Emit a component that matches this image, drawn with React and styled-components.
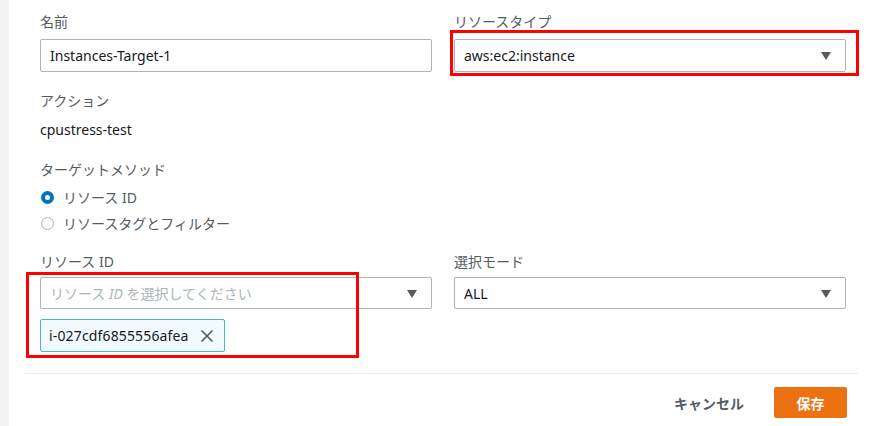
import styled, { createGlobalStyle } from 'styled-components';

const GlobalStyle = createGlobalStyle`
  html, body {
    margin: 0;
    padding: 0;
    background: #ffffff;
  }
  body {
    font-family: "Noto Sans", "Noto Sans CJK JP", sans-serif;
    font-size: 14px;
    color: #16191f;
  }
`;

const Page = styled.div`
  position: relative;
  display: flex;
  width: 884px;
  height: 426px;
  overflow: hidden;
`;

const Strip = styled.div`
  width: 9px;
  background: #f2f3f3;
`;

const Panel = styled.div`
  flex: 1;
  padding: 0 26px 0 15px;
`;

const Content = styled.div`
  padding: 12px 12px 0 16px;
`;

const Grid = styled.div`
  display: grid;
  grid-template-columns: 392px 392px;
  column-gap: 22px;
  margin-top: ${p => p.$top || 0}px;
`;

const Field = styled.div`
  display: flex;
  flex-direction: column;
`;

const Label = styled.div`
  font-size: 14px;
  line-height: 20px;
  color: #545b64;
  margin-top: ${p => p.$top || 0}px;
  margin-bottom: ${p => p.$bottom || 0}px;
`;

const Value = styled.div`
  font-size: 14px;
  line-height: 20px;
  color: #16191f;
  margin-top: ${p => p.$top || 0}px;
`;

const Box = styled.div`
  box-sizing: border-box;
  height: ${p => p.$h || 32}px;
  border: 1px solid #aab7b8;
  border-radius: 2px;
  background: #fff;
  display: flex;
  align-items: center;
  padding: 0 14px 0 9px;
  font-size: 14px;
  color: #16191f;
`;

const BoxText = styled.span`
  flex: 1;
  color: ${p => (p.$placeholder ? '#aab7b8' : '#16191f')};
  white-space: nowrap;
`;

const Caret = styled.span`
  width: 0;
  height: 0;
  border-left: 5px solid transparent;
  border-right: 5px solid transparent;
  border-top: 8px solid #545b64;
  margin-top: 1px;
`;

const RadioRow = styled.label`
  display: flex;
  align-items: center;
  gap: 9px;
  height: 20px;
  margin-top: ${p => p.$top || 0}px;
  font-size: 14px;
  color: #545b64;
`;

const RadioDot = styled.span`
  box-sizing: border-box;
  width: 13px;
  height: 13px;
  border-radius: 50%;
  border: ${p => (p.$checked ? '4px solid #0073bb' : '1px solid #aab7b8')};
  background: #fff;
  margin-left: 1px;
`;

const Tag = styled.div`
  box-sizing: border-box;
  display: inline-flex;
  align-self: flex-start;
  align-items: center;
  gap: 11px;
  height: 33px;
  margin-top: 10px;
  padding: 0 10px 0 8px;
  background: #f1faff;
  border: 1px solid #44b9d6;
  border-radius: 2px;
  font-size: 14px;
  letter-spacing: 0.15px;
  color: #16191f;
`;

const Divider = styled.hr`
  border: none;
  border-top: 1px solid #eaeded;
  margin: 21px 0 0;
`;

const Footer = styled.div`
  display: flex;
  justify-content: flex-end;
  align-items: center;
  gap: 30px;
  margin-top: 13px;
  padding-right: 11px;
`;

const TextButton = styled.button`
  border: none;
  background: none;
  font-family: inherit;
  font-size: 14px;
  font-weight: 700;
  color: #545b64;
  padding: 0;
`;

const PrimaryButton = styled.button`
  box-sizing: border-box;
  width: 73px;
  height: 31px;
  border: none;
  border-radius: 2px;
  background: #ec7211;
  color: #fff;
  font-family: inherit;
  font-size: 14px;
  font-weight: 700;
`;

const Highlight = styled.div`
  position: absolute;
  left: ${p => p.$x}px;
  top: ${p => p.$y}px;
  width: ${p => p.$w}px;
  height: ${p => p.$h}px;
  box-sizing: border-box;
  border: 3px solid #ff0000;
  pointer-events: none;
`;

const CloseIcon = () => (
  <svg width="14" height="14" viewBox="0 0 14 14">
    <path d="M1.5 1.5 L12.5 12.5 M12.5 1.5 L1.5 12.5" stroke="#545b64" strokeWidth="1.7" fill="none" />
  </svg>
);

export default function App() {
  return (
    <>
      <GlobalStyle />
      <Page>
        <Strip />
        <Panel>
          <Content>
            <Grid>
              <Field>
                <Label $bottom={7}>名前</Label>
                <Box $h={33}>
                  <BoxText>Instances-Target-1</BoxText>
                </Box>
              </Field>
              <Field>
                <Label $bottom={7}>リソースタイプ</Label>
                <Box $h={33}>
                  <BoxText>aws:ec2:instance</BoxText>
                  <Caret />
                </Box>
              </Field>
            </Grid>

            <Label $top={19}>アクション</Label>
            <Value $top={9}>cpustress-test</Value>

            <Label $top={20}>ターゲットメソッド</Label>
            <RadioRow $top={7}>
              <RadioDot $checked />
              リソース ID
            </RadioRow>
            <RadioRow $top={6}>
              <RadioDot />
              リソースタグとフィルター
            </RadioRow>

            <Grid $top={19}>
              <Field>
                <Label $bottom={5}>リソース ID</Label>
                <Box>
                  <BoxText $placeholder>
                    リソース <i>ID</i> を選択してください
                  </BoxText>
                  <Caret />
                </Box>
                <Tag>
                  i-027cdf6855556afea
                  <CloseIcon />
                </Tag>
              </Field>
              <Field>
                <Label $bottom={5}>選択モード</Label>
                <Box>
                  <BoxText>ALL</BoxText>
                  <Caret />
                </Box>
              </Field>
            </Grid>
          </Content>
          <Divider />
          <Footer>
            <TextButton>キャンセル</TextButton>
            <PrimaryButton>保存</PrimaryButton>
          </Footer>
        </Panel>
        <Highlight $x={450} $y={30} $w={409} $h={46} />
        <Highlight $x={26} $y={272} $w={333} $h={86} />
      </Page>
    </>
  );
}
